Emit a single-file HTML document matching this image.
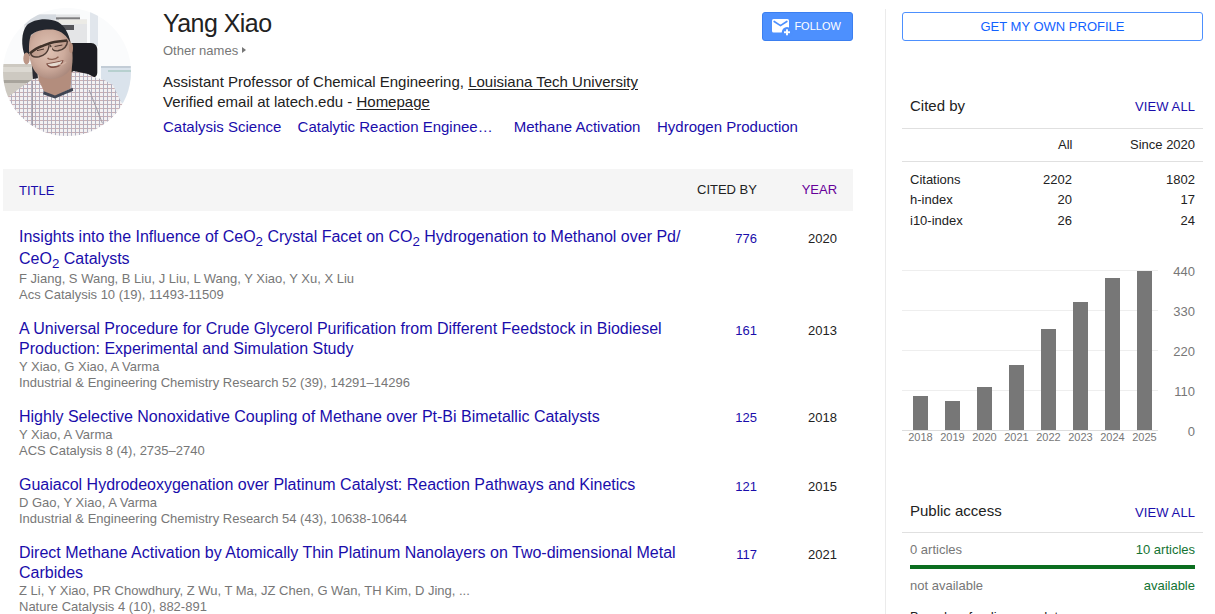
<!DOCTYPE html>
<html><head><meta charset="utf-8">
<style>
*{margin:0;padding:0;box-sizing:border-box}
html,body{width:1215px;height:614px;overflow:hidden;background:#fff}
body{font-family:"Liberation Sans",sans-serif;color:#222;font-size:13px;position:relative}
.abs{position:absolute;white-space:nowrap}
a{color:#1a0dab;text-decoration:none}
.u{text-decoration:underline;color:#222;text-underline-offset:2px}
.g{color:#777}
#photo{position:absolute;left:3px;top:8px;width:128px;height:128px;border-radius:50%;overflow:hidden;background:#e9ecef}
#name{left:163px;top:8px;font-size:25px;line-height:30px;color:#222;letter-spacing:-0.55px}
#other{left:163px;top:43px;font-size:13px;line-height:16px;color:#777}
.inf{left:163px;font-size:15px;line-height:20px;color:#222}
.kw{font-size:15px;line-height:20px;color:#1a0dab;top:117px}
#follow{left:762px;top:12px;width:91px;height:29px;background:#4d90fe;border:1px solid #3b7ff0;border-radius:3px;color:#fff;font-size:13px}
#vline{position:absolute;left:885px;top:9px;width:1px;height:605px;background:#ebebeb}
#hdr{position:absolute;left:3px;top:169px;width:850px;height:42px;background:#f5f5f5}
.th{font-size:13px;line-height:16px;top:183px}
.t{left:19px;font-size:16px;line-height:20px;color:#1a0dab}
.s{left:19px;font-size:13px;line-height:16px;color:#777}
.c{font-size:13px;line-height:16px;color:#1a0dab;text-align:right;width:40px;left:717px}
.y{font-size:13px;line-height:16px;color:#222;text-align:right;width:40px;left:797px}
sub{font-size:13.33px;vertical-align:-4px;line-height:0}
#gmop{left:902px;top:12px;width:301px;height:29px;border:1px solid #4d90fe;border-radius:3px;color:#1262ff;font-size:13px;text-align:center;line-height:27px}
.rt{font-size:15px;line-height:20px;color:#222}
.va{font-size:13px;line-height:16px;color:#1a0dab;letter-spacing:0.1px}
.hl{position:absolute;left:902px;width:301px;height:1px;background:#e0e0e0}
.st{font-size:13px;line-height:16px;color:#222}
.num{width:40px;text-align:right}
.gl{position:absolute;left:902px;width:256px;height:1px;background:#eee}
.bar{position:absolute;width:15px;background:#777}
.yl{top:431px;font-size:11px;line-height:13px;color:#777;width:31px;text-align:center}
.vl{left:1155px;width:40px;text-align:right;font-size:13px;line-height:16px;color:#777;margin-top:2px}
.tri{position:absolute;left:79px;top:4.2px;width:0;height:0;border-left:4px solid #777;border-top:3.8px solid transparent;border-bottom:3.8px solid transparent}
</style></head><body>
<svg id="photosvg" style="position:absolute;left:3px;top:8px" width="128" height="128" viewBox="0 0 128 128">
<defs>
<clipPath id="cc"><circle cx="64" cy="64" r="64"/></clipPath>
<pattern id="chk" width="4" height="4" patternUnits="userSpaceOnUse">
<rect width="4" height="4" fill="#f3f1f2"/>
<rect width="4" height="1" fill="#c9aeb3"/>
<rect width="1" height="4" fill="#b0afc0"/>
</pattern>
<radialGradient id="skin" cx="0.45" cy="0.42" r="0.62">
<stop offset="0" stop-color="#e0c4b6"/><stop offset="0.6" stop-color="#cdab9c"/><stop offset="1" stop-color="#aa897d"/>
</radialGradient>
<filter id="bl" x="-10%" y="-10%" width="120%" height="120%"><feGaussianBlur stdDeviation="0.6"/></filter>
</defs>
<g clip-path="url(#cc)">
<rect width="128" height="128" fill="#fafbfc"/>
<g filter="url(#bl)">
<polygon points="21.0,17.0 32.0,6.5 77.0,6.5 77.0,11.5 84.0,11.5 84.0,36.0 37.0,36.0 21.0,32.0" fill="#e4e5e7"/>
<polygon points="21.0,17.0 32.0,6.5 53.0,6.5 53.0,11.0 27.0,17.0" fill="#d5dae0"/>
<polygon points="53.0,9.3 77.0,9.3 77.0,11.5 53.0,11.5" fill="#7e7e80"/>
<polygon points="56.0,11.5 84.0,11.5 84.0,16.0 56.0,16.0" fill="#ecebe6"/>
<polygon points="56.0,17.0 71.0,17.0 71.0,22.0 56.0,22.0" fill="#56575a"/>
<polygon points="87.0,4.0 95.0,4.0 95.0,38.0 87.0,38.0" fill="#e1e6ec"/>
<polygon points="-3.0,56.0 33.0,56.0 33.0,92.0 -3.0,92.0" fill="#cdc9c1"/>
<polygon points="-3.0,59.0 33.0,59.0 33.0,64.0 -3.0,64.0" fill="#dcd9d2"/>
<polygon points="-3.0,72.0 33.0,72.0 33.0,75.0 -3.0,75.0" fill="#a8a49c"/>
<polygon points="98.0,58.0 132.0,58.0 132.0,98.0 98.0,98.0" fill="#dae3ec"/>
<polygon points="98.0,58.0 132.0,58.0 132.0,60.0 98.0,60.0" fill="#c2ccd6"/>
<polygon points="105.0,62.0 132.0,62.0 132.0,64.0 105.0,64.0" fill="#b7d0cf"/>
<path d="M67.0,35.0 L88.0,35.0 C92.0,35.0 94.3,38.0 94.3,42.0 L94.3,64.0 C94.3,68.0 92.0,70.0 88.0,70.0 L67.0,70.0 Z" fill="#1f1f20"/>
<polygon points="29.0,58.0 34.0,58.0 35.0,71.0 30.0,72.0" fill="#2a2b30"/>
<polygon points="1.0,92.0 17.0,80.0 30.0,71.0 42.0,69.0 57.0,71.0 70.7,63.0 85.0,66.0 91.0,69.0 101.0,72.0 110.0,77.0 118.0,94.0 132.0,104.0 132.0,132.0 -3.0,132.0" fill="url(#chk)"/>
<polyline points="29.5,73.0 29.5,118.0" stroke="#a09ca6" stroke-width="1" fill="none"/>
<polyline points="86.2,82.0 99.5,115.4" stroke="#a09ca6" stroke-width="1" fill="none"/>
<polygon points="35.0,62.0 47.0,70.0 63.0,65.0 69.0,56.0 68.5,66.0 67.6,80.5 52.0,88.8 41.5,84.0 35.5,72.0" fill="#b38d7d"/>
<polygon points="40.8,83.3 52.0,87.6 69.6,79.8 70.2,82.8 52.0,90.5 40.0,86.3" fill="#3f4452"/>
<path d="M25.5,32.0 C30.0,19.0 55.0,16.0 65.0,27.0 C69.0,34.0 70.5,48.0 69.0,58.0 C66.0,66.0 57.0,71.0 48.0,71.0 C39.0,71.0 32.0,66.0 29.0,58.0 C26.0,50.0 24.5,40.0 25.5,32.0 Z" fill="url(#skin)"/>
<path d="M22.0,48.0 C18.0,38.0 18.0,24.0 24.0,17.0 C30.0,11.0 45.0,9.0 55.0,14.0 C62.0,18.0 66.0,26.0 67.5,35.0 C64.0,28.0 59.0,23.0 50.0,21.5 C41.0,21.0 33.0,22.5 28.0,27.0 C26.0,32.0 25.5,40.0 26.5,48.0 Z" fill="#23262d"/>
<ellipse cx="23.5" cy="50.5" rx="3.2" ry="6" fill="#bc9787"/>
<ellipse cx="68" cy="40" rx="2" ry="5" fill="#b58d7b"/>
<path d="M27.5,45.5 C28.5,49.0 32.0,49.5 36.0,48.7 C41.0,47.5 45.0,45.5 46.0,37.5 L38.5,38.3 Z" fill="#b39080" fill-opacity="0.5"/>
<path d="M47.0,37.0 C48.5,42.0 51.0,43.3 55.0,42.8 C60.0,42.0 64.0,40.0 64.6,32.5 Z" fill="#b39080" fill-opacity="0.5"/>
<path d="M26.8,45.5 C31.0,42.0 35.0,39.5 38.5,38.3 C42.0,37.0 45.0,35.8 48.3,34.7 C53.0,33.5 59.0,32.8 64.2,32.4" stroke="#3f3029" stroke-width="2.5" fill="none"/>
<path d="M27.8,45.5 C28.5,49.0 32.0,49.5 36.0,48.7 C41.0,47.5 45.0,45.5 46.2,37.2" stroke="#4e3c35" stroke-width="1.4" fill="none"/>
<path d="M47.2,36.8 C48.5,42.0 51.0,43.3 55.0,42.8 C60.0,42.0 64.0,40.0 64.6,32.6" stroke="#4e3c35" stroke-width="1.4" fill="none"/>
<path d="M34.0,42.6 L41.0,41.0" stroke="#4a352e" stroke-width="1" fill="none"/>
<path d="M51.6,38.5 L59.4,37.0" stroke="#4a352e" stroke-width="1" fill="none"/>
<path d="M48.0,39.0 C49.0,43.0 49.0,46.0 48.5,48.0" stroke="#dcbcac" stroke-width="1.6" fill="none"/>
<path d="M44.5,50.0 C46.5,52.0 52.0,52.0 55.5,48.7" stroke="#8a5f50" stroke-width="1.4" fill="none"/>
<path d="M43.2,55.5 C48.0,54.8 55.0,53.5 60.5,52.0 C60.0,56.0 56.5,59.8 50.0,60.0 C46.0,60.0 44.0,58.0 43.2,55.5 Z" fill="#7d4d42"/>
<path d="M44.5,56.0 C49.0,55.5 55.0,54.2 59.3,53.0 C58.5,55.5 55.5,58.0 50.5,58.3 C47.5,58.3 45.5,57.5 44.5,56.0 Z" fill="#e5dbd0"/>
<path d="M55.0,56.0 C57.0,58.0 61.0,56.0 63.0,54.0" stroke="#d8b8a8" stroke-width="1.5" fill="none" stroke-opacity="0.7"/>
</g>
</g>
</svg>
<div class="abs" id="name">Yang Xiao</div>
<div class="abs" id="other">Other names<span class="tri"></span></div>
<div class="abs inf" style="top:72px">Assistant Professor of Chemical Engineering, <span class="u">Louisiana Tech University</span></div>
<div class="abs inf" style="top:92px">Verified email at latech.edu - <span class="u">Homepage</span></div>
<div class="abs kw" style="left:163px">Catalysis Science</div>
<div class="abs kw" style="left:297.6px">Catalytic Reaction Enginee…</div>
<div class="abs kw" style="left:513.7px">Methane Activation</div>
<div class="abs kw" style="left:657px">Hydrogen Production</div>
<div class="abs" id="follow"></div>
<svg style="position:absolute;left:762px;top:12px" width="91" height="29" viewBox="0 0 91 29">
<rect x="10" y="7" width="17" height="13.6" rx="1.6" fill="#fff"/>
<polyline points="12.2,9.5 18.5,13.6 24.8,9.5" fill="none" stroke="#4d90fe" stroke-width="1.7" stroke-linecap="round" stroke-linejoin="miter"/>
<circle cx="25" cy="20.2" r="5.2" fill="#4d90fe"/>
<rect x="22" y="19.3" width="6" height="1.9" fill="#fff"/>
<rect x="24.05" y="17.3" width="1.9" height="6" fill="#fff"/>
</svg>
<div class="abs" style="left:794.4px;top:18px;font-size:11px;line-height:16px;color:#fff">FOLLOW</div>
<div id="vline"></div>

<div id="hdr"></div>
<div class="abs th" style="left:19px;color:#1a0dab">TITLE</div>
<div class="abs th" style="left:697px;color:#222;top:182px">CITED BY</div>
<div class="abs th" style="left:801.7px;color:#660099;top:182px">YEAR</div>

<div class="abs t" style="top:227px">Insights into the Influence of CeO<sub>2</sub> Crystal Facet on CO<sub>2</sub> Hydrogenation to Methanol over Pd/</div>
<div class="abs t" style="top:249px">CeO<sub>2</sub> Catalysts</div>
<div class="abs s" style="top:271px">F Jiang, S Wang, B Liu, J Liu, L Wang, Y Xiao, Y Xu, X Liu</div>
<div class="abs s" style="top:287px">Acs Catalysis 10 (19), 11493-11509</div>
<div class="abs c" style="top:231px">776</div>
<div class="abs y" style="top:231px">2020</div>

<div class="abs t" style="top:319px">A Universal Procedure for Crude Glycerol Purification from Different Feedstock in Biodiesel</div>
<div class="abs t" style="top:339px">Production: Experimental and Simulation Study</div>
<div class="abs s" style="top:359px">Y Xiao, G Xiao, A Varma</div>
<div class="abs s" style="top:375px">Industrial &amp; Engineering Chemistry Research 52 (39), 14291–14296</div>
<div class="abs c" style="top:323px">161</div>
<div class="abs y" style="top:323px">2013</div>

<div class="abs t" style="top:407px">Highly Selective Nonoxidative Coupling of Methane over Pt-Bi Bimetallic Catalysts</div>
<div class="abs s" style="top:427px">Y Xiao, A Varma</div>
<div class="abs s" style="top:443px">ACS Catalysis 8 (4), 2735–2740</div>
<div class="abs c" style="top:410px">125</div>
<div class="abs y" style="top:410px">2018</div>

<div class="abs t" style="top:475px">Guaiacol Hydrodeoxygenation over Platinum Catalyst: Reaction Pathways and Kinetics</div>
<div class="abs s" style="top:495px">D Gao, Y Xiao, A Varma</div>
<div class="abs s" style="top:511px">Industrial &amp; Engineering Chemistry Research 54 (43), 10638-10644</div>
<div class="abs c" style="top:479px">121</div>
<div class="abs y" style="top:479px">2015</div>

<div class="abs t" style="top:543px">Direct Methane Activation by Atomically Thin Platinum Nanolayers on Two-dimensional Metal</div>
<div class="abs t" style="top:563px">Carbides</div>
<div class="abs s" style="top:583px">Z Li, Y Xiao, PR Chowdhury, Z Wu, T Ma, JZ Chen, G Wan, TH Kim, D Jing, ...</div>
<div class="abs s" style="top:599px">Nature Catalysis 4 (10), 882-891</div>
<div class="abs c" style="top:547px">117</div>
<div class="abs y" style="top:547px">2021</div>

<!-- right column -->
<div class="abs" id="gmop">GET MY OWN PROFILE</div>
<div class="abs rt" style="left:910px;top:96px">Cited by</div>
<div class="abs va" style="left:1135px;top:99px">VIEW ALL</div>
<div class="hl" style="top:128px"></div>
<div class="abs st" style="left:1058px;top:137px">All</div>
<div class="abs st" style="left:1130px;top:137px">Since 2020</div>
<div class="hl" style="top:161px"></div>
<div class="abs st" style="left:910px;top:172px">Citations</div>
<div class="abs st" style="left:910px;top:192px">h-index</div>
<div class="abs st" style="left:910px;top:213px">i10-index</div>

<div class="abs rt" style="left:910px;top:501px">Public access</div>
<div class="abs va" style="left:1135px;top:505px">VIEW ALL</div>
<div class="hl" style="top:532px"></div>

<div class="abs st num" style="left:1032px;top:172px">2202</div>
<div class="abs st num" style="left:1155px;top:172px">1802</div>
<div class="abs st num" style="left:1032px;top:192px">20</div>
<div class="abs st num" style="left:1155px;top:192px">17</div>
<div class="abs st num" style="left:1032px;top:213px">26</div>
<div class="abs st num" style="left:1155px;top:213px">24</div>
<div class="gl" style="top:270px"></div>
<div class="gl" style="top:310px"></div>
<div class="gl" style="top:350px"></div>
<div class="gl" style="top:390px"></div>
<div class="gl" style="top:430px;background:#ddd"></div>
<div class="bar" style="left:913px;top:396px;height:34px"></div>
<div class="abs yl" style="left:905px">2018</div>
<div class="bar" style="left:945px;top:401px;height:29px"></div>
<div class="abs yl" style="left:937px">2019</div>
<div class="bar" style="left:977px;top:387px;height:43px"></div>
<div class="abs yl" style="left:969px">2020</div>
<div class="bar" style="left:1009px;top:365px;height:65px"></div>
<div class="abs yl" style="left:1001px">2021</div>
<div class="bar" style="left:1041px;top:329px;height:101px"></div>
<div class="abs yl" style="left:1033px">2022</div>
<div class="bar" style="left:1073px;top:302px;height:128px"></div>
<div class="abs yl" style="left:1065px">2023</div>
<div class="bar" style="left:1105px;top:278px;height:152px"></div>
<div class="abs yl" style="left:1097px">2024</div>
<div class="bar" style="left:1137px;top:271px;height:159px"></div>
<div class="abs yl" style="left:1129px">2025</div>
<div class="abs vl" style="top:262px">440</div>
<div class="abs vl" style="top:302px">330</div>
<div class="abs vl" style="top:342px">220</div>
<div class="abs vl" style="top:382px">110</div>
<div class="abs vl" style="top:422px">0</div>
<div class="abs st" style="left:910px;top:542px;color:#777">0 articles</div>
<div class="abs st" style="left:1095px;top:542px;color:#137333;text-align:right;width:100px">10 articles</div>
<div style="position:absolute;left:910px;top:565px;width:285px;height:4px;background:#0b6e1f"></div>
<div class="abs st" style="left:910px;top:578px;color:#777">not available</div>
<div class="abs st" style="left:1095px;top:578px;color:#137333;text-align:right;width:100px">available</div>
<div class="abs st" style="left:910px;top:609px;color:#222">Based on funding mandates</div>
</body></html>
